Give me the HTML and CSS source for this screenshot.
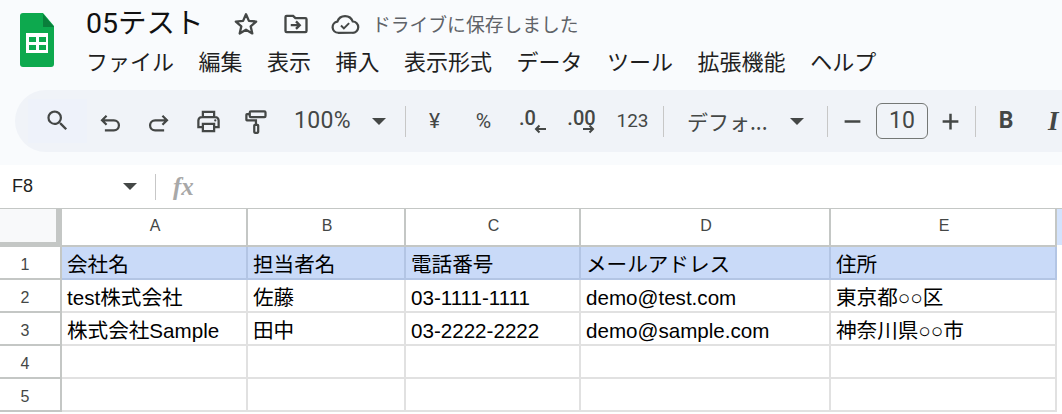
FILE: index.html
```html
<!DOCTYPE html>
<html lang="ja">
<head>
<meta charset="utf-8">
<title>05テスト</title>
<link rel="stylesheet" href="styles.css">
</head>
<body>
<header class="top">
  <div class="titlebar">
    <svg class="logo" viewBox="0 0 35 54" aria-hidden="true">
      <path d="M3 0H23L34 13V51a3 3 0 0 1-3 3H3a3 3 0 0 1-3-3V3a3 3 0 0 1 3-3z" fill="#0da94e"/>
      <path d="M23 1L34 14H23z" fill="#0a7f3b"/>
      <path d="M6 20H28V40H6zM9 24V29H16V24zM19 24V29H26V24zM9 32V37H16V32zM19 32V37H26V32z" fill="#fff" fill-rule="evenodd"/>
    </svg>
    <div class="titlecol">
      <div class="titlerow">
        <span class="doc">05テスト</span>
        <svg class="ic star" viewBox="0 0 24 24"><path d="M12 3.600l2.500 5.700 6.200.6-4.700 4.100 1.400 6.100L12 16.900 6.600 20.100 8 14 3.300 9.900l6.200-.6z" fill="none" stroke="#444746" stroke-width="2" stroke-linejoin="round"/></svg>
        <svg class="ic move" viewBox="0 0 24 24"><path d="M3 6a1 1 0 0 1 1-1h5.500l2 2H20a1 1 0 0 1 1 1v10a1 1 0 0 1-1 1H4a1 1 0 0 1-1-1z" fill="none" stroke="#444746" stroke-width="2"/><path d="M7.500 13h7M12 9.800L15.200 13 12 16.200" fill="none" stroke="#444746" stroke-width="2"/></svg>
        <svg class="ic cloud" viewBox="0 0 24 24"><path d="M6.500 19a4.500 4.500 0 0 1-.6-8.950A6.500 6.500 0 0 1 18.200 10a4.500 4.500 0 0 1-.2 9z" fill="none" stroke="#444746" stroke-width="1.800"/><path d="M8.800 13.200l2.300 2.300 4.200-4.200" fill="none" stroke="#444746" stroke-width="1.600"/></svg>
        <span class="saved">ドライブに保存しました</span>
      </div>
      <nav class="menu">
        <span>ファイル</span><span>編集</span><span>表示</span><span>挿入</span><span>表示形式</span><span>データ</span><span>ツール</span><span>拡張機能</span><span>ヘルプ</span>
      </nav>
    </div>
  </div>
  <div class="toolbar">
    <span class="tool search"><svg class="ic" viewBox="0 0 24 24"><path d="M15.500 14h-.79l-.28-.27A6.471 6.471 0 0 0 16 9.500 6.500 6.500 0 1 0 9.500 16c1.610 0 3.090-.59 4.230-1.570l.27.28v.79l5 4.990L20.490 19l-4.990-5zm-6 0C7.010 14 5 11.990 5 9.500S7.010 5 9.500 5 14 7.010 14 9.500 11.990 14 9.500 14z" fill="#444746"/></svg></span>
    <span class="tool w48 nudge"><svg class="ic" viewBox="0 0 24 24"><path d="M8.500 6L4.500 10l4 4M5 10h10a4.500 4.500 0 0 1 0 9H7" fill="none" stroke="#444746" stroke-width="2"/></svg></span>
    <span class="tool w48 nudge"><svg class="ic" viewBox="0 0 24 24"><path d="M15.500 6l4 4-4 4M19 10H9a4.500 4.500 0 0 0 0 9h8" fill="none" stroke="#444746" stroke-width="2"/></svg></span>
    <span class="tool w50"><svg class="ic" viewBox="0 0 24 24"><path d="M7 8V3.500h10V8M6.500 17H3v-6a3 3 0 0 1 3-3h12a3 3 0 0 1 3 3v6h-3.500M7 14h10v6.500H7z" fill="none" stroke="#444746" stroke-width="2"/><circle cx="18" cy="11" r="1" fill="#444746"/></svg></span>
    <span class="tool w46"><svg class="ic" viewBox="0 0 24 24"><rect x="6" y="3" width="14" height="5" rx="1" fill="none" stroke="#444746" stroke-width="2"/><path d="M6 5.500H3.500a.5.5 0 0 0-.5.5v4.500a.5.5 0 0 0 .5.5h8v3.500" fill="none" stroke="#444746" stroke-width="2"/><rect x="10" y="15" width="3.500" height="7" rx=".6" fill="none" stroke="#444746" stroke-width="2"/></svg></span>
    <span class="zoom">100%</span>
    <span class="caret zoomcaret"></span>
    <span class="sep sep1"></span>
    <span class="tool w49 glyph yen">¥</span>
    <span class="tool w49 glyph">%</span>
    <span class="tool w49 dec dec1">.0<svg class="arrow" viewBox="0 0 14 10"><path d="M13 5H3M6.500 1.500L3 5l3.500 3.500" fill="none" stroke="#444746" stroke-width="2"/></svg></span>
    <span class="tool w49 dec">.00<svg class="arrow" viewBox="0 0 14 10"><path d="M1 5h10M7.500 1.500L11 5 7.500 8.500" fill="none" stroke="#444746" stroke-width="2"/></svg></span>
    <span class="tool w49 num">123</span>
    <span class="sep sep2"></span>
    <span class="font">デフォ...</span>
    <span class="caret fontcaret"></span>
    <span class="sep sep3"></span>
    <span class="tool w48"><svg class="ic" viewBox="0 0 24 24"><path d="M5 12h14" stroke="#444746" stroke-width="2.200"/></svg></span>
    <span class="size">10</span>
    <span class="tool w44"><svg class="ic" viewBox="0 0 24 24"><path d="M5 12h14M12 5v14" stroke="#444746" stroke-width="2.200"/></svg></span>
    <span class="sep sep4"></span>
    <span class="tool w60 bold">B</span>
    <span class="tool w40 ital">I</span>
  </div>
</header>
<div class="formula">
  <span class="namebox">F8</span>
  <span class="caret namecaret"></span>
  <span class="sep fsep"></span>
  <span class="fx">fx</span>
</div>
<div class="grid">
  <div class="corner"></div><div class="ch">A</div><div class="ch">B</div><div class="ch">C</div><div class="ch">D</div><div class="ch last">E</div>

  <div class="rh">1</div><div class="c hd">会社名</div><div class="c hd">担当者名</div><div class="c hd">電話番号</div><div class="c hd">メールアドレス</div><div class="c hd last">住所</div>
  <div class="rh">2</div><div class="c">test株式会社</div><div class="c">佐藤</div><div class="c">03-1111-1111</div><div class="c">demo@test.com</div><div class="c last">東京都○○区</div>
  <div class="rh">3</div><div class="c">株式会社Sample</div><div class="c">田中</div><div class="c">03-2222-2222</div><div class="c">demo@sample.com</div><div class="c last">神奈川県○○市</div>
  <div class="rh">4</div><div class="c"></div><div class="c"></div><div class="c"></div><div class="c"></div><div class="c last"></div>
  <div class="rh">5</div><div class="c"></div><div class="c"></div><div class="c"></div><div class="c"></div><div class="c last"></div>
</div>
</body>
</html>
```

FILE: styles.css
```css
* { box-sizing: border-box; }
html, body { margin: 0; padding: 0; }
body {
  width: 1062px;
  height: 414px;
  overflow: hidden;
  background: #fff;
  font-family: "Liberation Sans", "Noto Sans CJK JP", sans-serif;
  color: #000;
}
.top { background: #f9fbfd; height: 165px; padding-top: 8px; }
.titlebar { display: flex; height: 82px; padding-left: 20px; }
.logo { width: 35px; height: 54px; margin-top: 5px; flex: none; }
.titlecol { margin-left: 31px; display: flex; flex-direction: column; }
.titlerow { display: flex; align-items: center; height: 32px; }
.doc { font: 28.500px/32px Roboto, "Noto Sans CJK JP", sans-serif; color: #111; width: 146px; white-space: nowrap; }
.ic { width: 27px; height: 27px; flex: none; display: block; }
.star { width: 28px; height: 28px; }
.move { margin-left: 22px; width: 28px; height: 28px; }
.cloud { margin-left: 20px; width: 30px; height: 30px; }
.saved { font: 18.800px/32px "Noto Sans CJK JP", sans-serif; color: #5f6368; margin-left: 12px; white-space: nowrap; }
.menu { display: flex; gap: 24.500px; margin: 5px 0 0 0; font: 22px/30px "Noto Sans CJK JP", sans-serif; color: #1f1f1f; white-space: nowrap; }
.menu span { display: block; }

.toolbar {
  margin-left: 15px;
  height: 62px;
  background: #f0f3f8;
  border-radius: 31px 0 0 31px;
  display: flex;
  align-items: center;
  padding-left: 13px;
  color: #444746;
  overflow: hidden;
}
.tool { display: flex; align-items: center; justify-content: center; height: 44px; flex: none; }
.search { width: 59px; background: #eef2fa; padding-bottom: 2px; }
.nudge { padding-right: 2px; padding-top: 2px; }
.w40 { width: 40px; } .w44 { width: 44px; } .w46 { width: 46px; } .w48 { width: 48px; }
.w49 { width: 49px; } .w50 { width: 50px; } .w60 { width: 60px; }
.zoom { font: 23px/44px Roboto, sans-serif; margin-left: 15px; width: 57px; flex: none; letter-spacing: .3px; }
.caret { width: 0; height: 0; border-left: 7px solid transparent; border-right: 7px solid transparent; border-top: 7px solid #444746; flex: none; }
.zoomcaret { margin-left: 21px; }
.sep { width: 1px; height: 31px; background: #c7c7c7; flex: none; }
.sep1 { margin-left: 19px; }
.yen { margin-left: 4px; }
.glyph { font: 21px/44px Roboto, "Noto Sans CJK JP", sans-serif; }
.dec { font: 500 20px/1 Roboto, sans-serif; position: relative; padding-bottom: 6px; }
.dec1 { padding-right: 10px; }
.arrow { width: 14px; height: 10px; position: absolute; left: 50%; margin-left: 0; bottom: 9px; }
.num { font: 19px/44px Roboto, sans-serif; margin-left: 2px; }
.sep2 { margin-left: 6px; }
.font { font: 21px/44px "Noto Sans CJK JP", sans-serif; margin-left: 23px; width: 85px; flex: none; white-space: nowrap; }
.fontcaret { margin-left: 18px; }
.sep3 { margin-left: 23px; }
.size {
  width: 52px; height: 36px; flex: none;
  border: 1px solid #747775; border-radius: 6px;
  font: 23px/34px Roboto, sans-serif; text-align: center;
}
.sep4 { margin-left: 3px; }
.bold { font: 700 23px/44px Roboto, sans-serif; }
.ital { font: italic 700 27px/44px "Liberation Serif", serif; justify-content: flex-start; padding-left: 12px; }

.formula { height: 43px; display: flex; align-items: center; background: #fff; }
.namebox { font-size: 18px; margin-left: 12px; width: 111px; color: #1f1f1f; }
.namecaret { margin-left: 0; }
.fsep { margin-left: 18px; height: 26px; }
.fx { font: italic 700 25px/1 "Liberation Serif", serif; color: #a8a8a8; margin-left: 17px; }

.grid {
  display: grid;
  grid-template-columns: 62px 186px 158px 175px 250px 226px 5px;
  grid-template-rows: 38px repeat(5, 33px);
  border-top: 1px solid #c4c7c5;
  position: relative;
}
.corner { background: #f8f9fa; border-right: 6px solid #c4c7c5; border-bottom: 5px solid #c4c7c5; }
.ch {
  border-right: 2px solid #c4c7c5; border-bottom: 2px solid #c4c7c5;
  font-size: 16px; line-height: 34px; text-align: center; color: #444746; padding-left: 2px;
}
.rh {
  grid-column: 1;
  border-right: 2px solid #c4c7c5; border-bottom: 2px solid #c4c7c5;
  font-size: 16px; line-height: 35px; text-align: center; color: #444746; padding-right: 10px;
}
.c {
  border-right: 2px solid #e1e1e1; border-bottom: 2px solid #e1e1e1;
  font-size: 20.600px; line-height: 31px; padding: 2px 5px 0 5px; color: #000; white-space: nowrap; overflow: hidden;
}
.c.last { grid-column: 6; }
.ch.last { grid-column: 6; }
.hd { background: #c9daf8; border-color: #b3c5e4; }
.grid::after {
  content: "";
  position: absolute;
  right: 0; top: 0;
  width: 5px; height: 36px;
  background: #d3e3fd;
}
```
